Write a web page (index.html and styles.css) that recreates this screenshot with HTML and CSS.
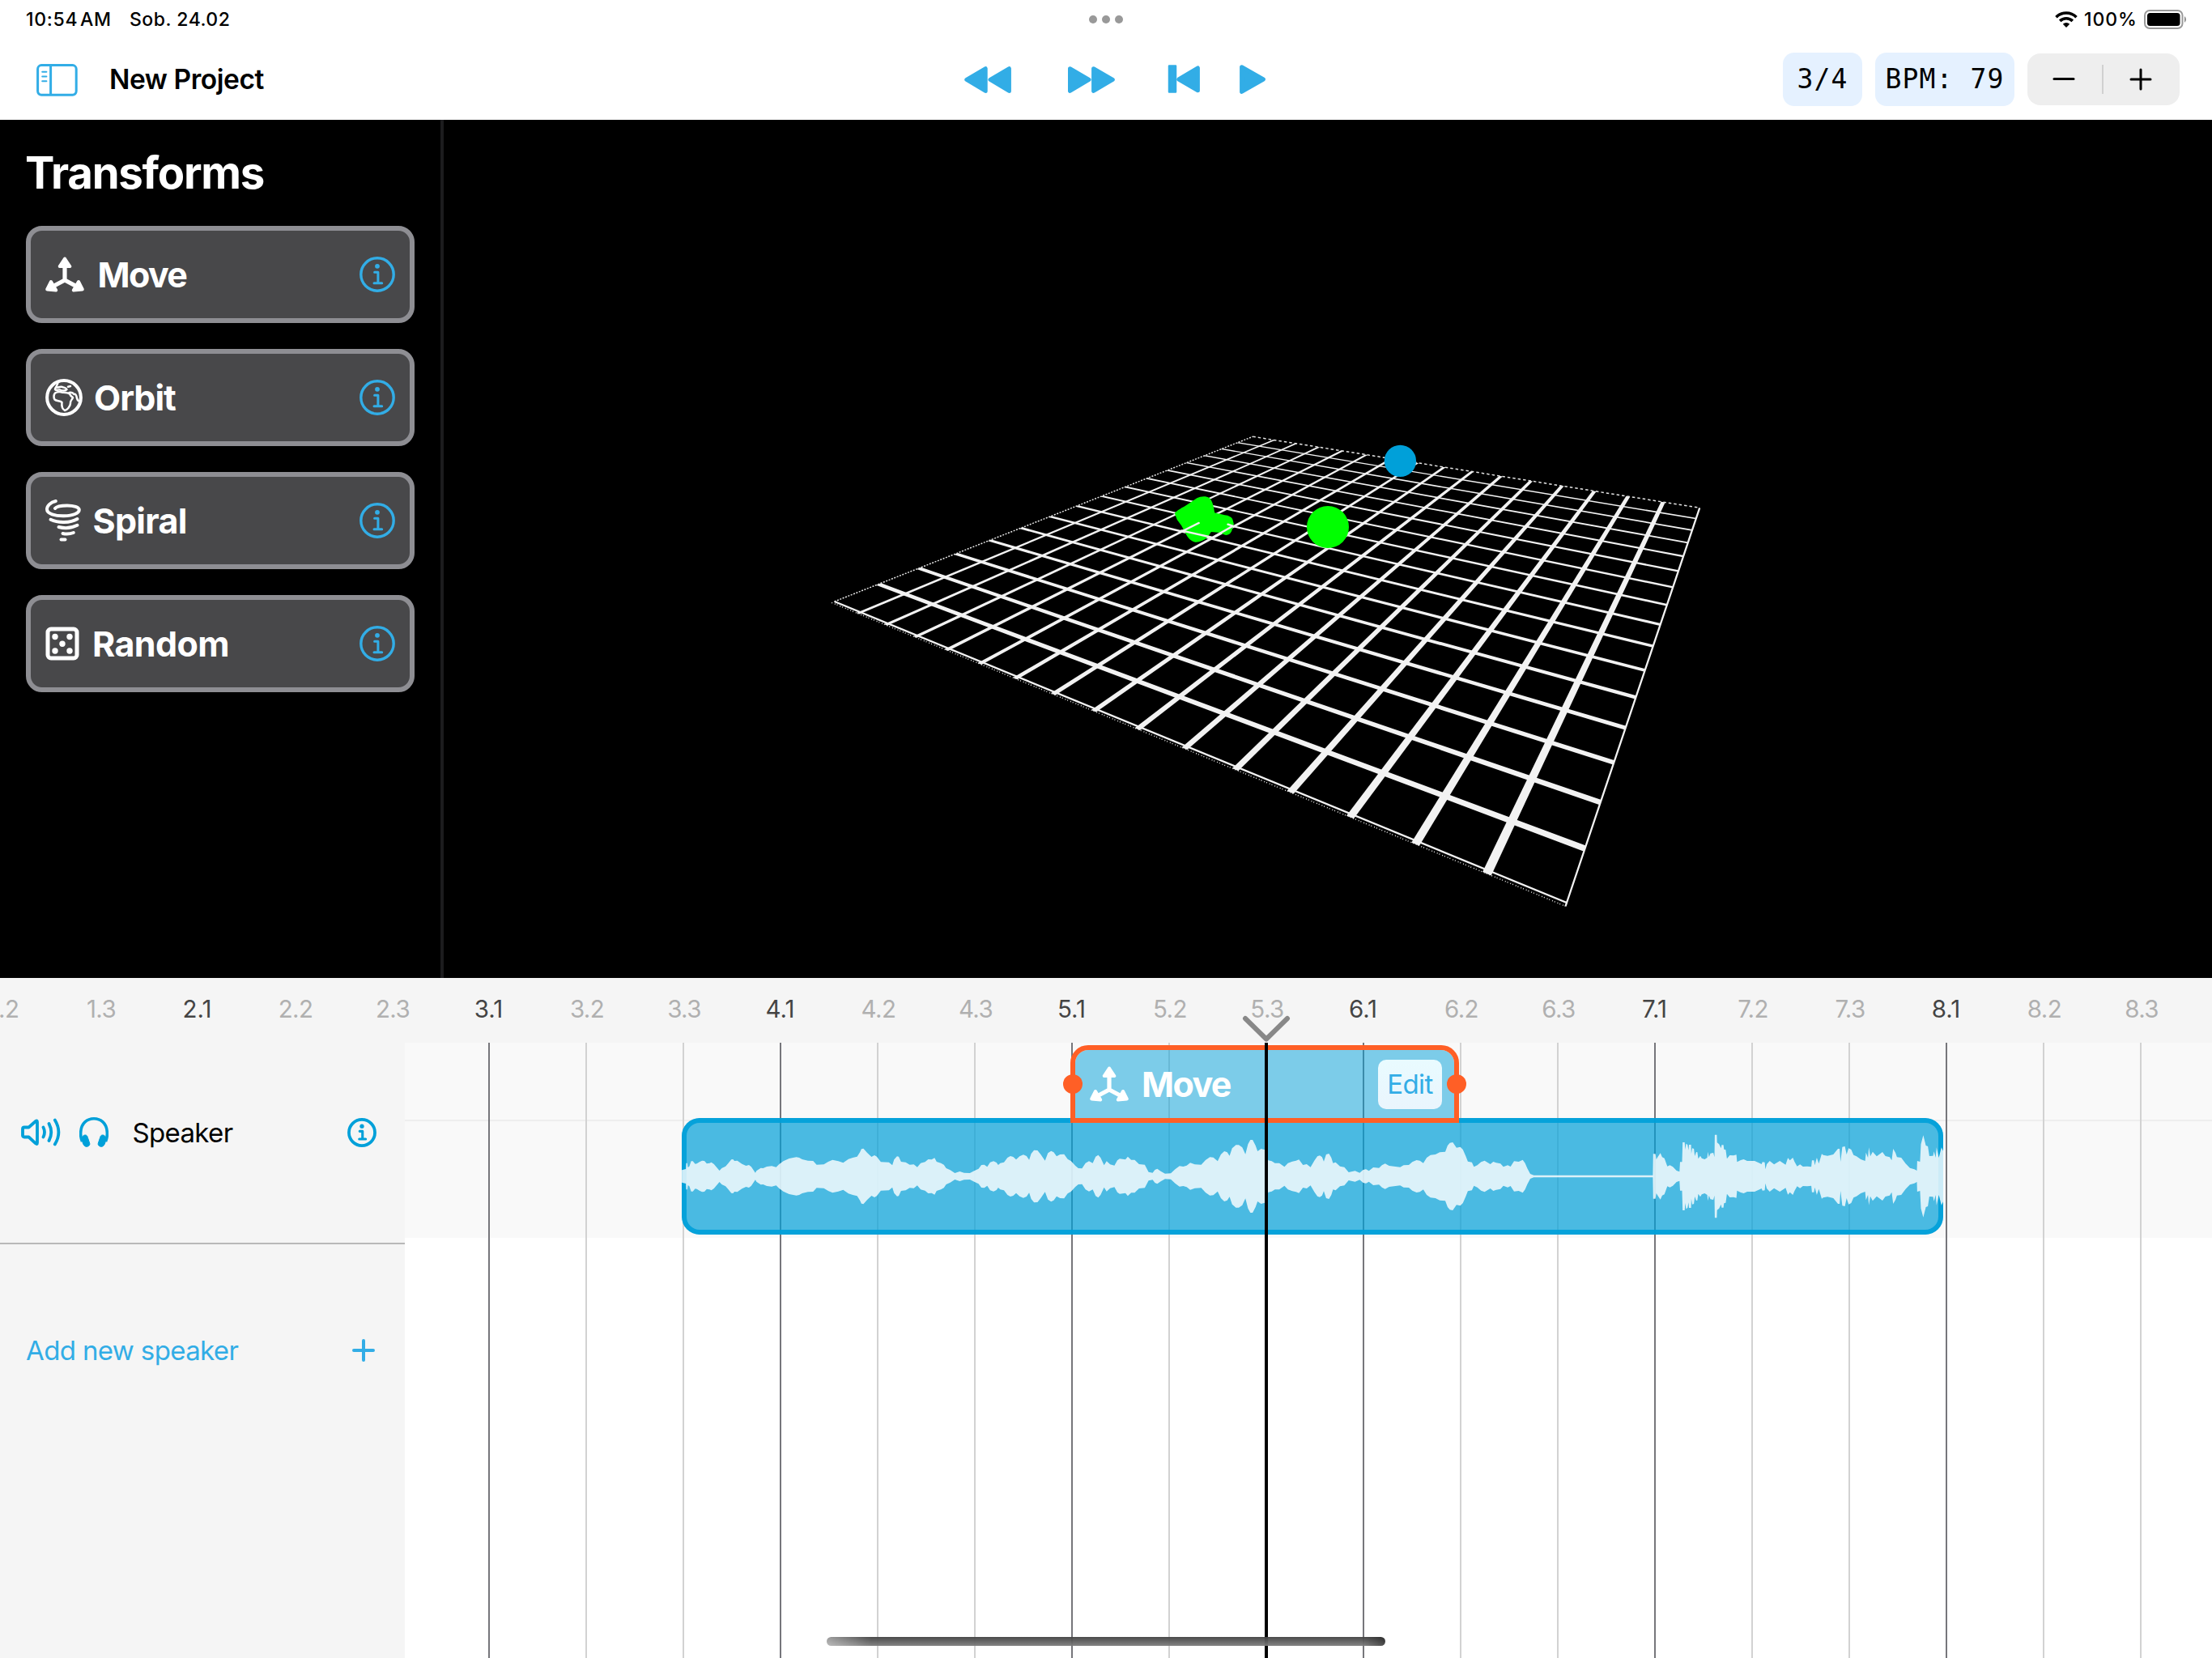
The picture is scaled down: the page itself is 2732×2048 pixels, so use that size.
FILE: index.html
```html
<!DOCTYPE html>
<html lang="en">
<head>
<meta charset="utf-8">
<title>New Project</title>
<link rel="stylesheet" href="styles.css">
</head>
<body>
<svg class="defs" width="0" height="0" aria-hidden="true">
  <symbol id="axes" viewBox="0 0 48 44">
    <g fill="none" stroke="currentColor" stroke-width="5.2" stroke-linecap="round">
      <path d="M24 10V29M24 29L8 37.500M24 29L40 37.500"/>
    </g>
    <g fill="currentColor" stroke="currentColor" stroke-width="4" stroke-linejoin="round">
      <path d="M24 2.500L30.300 12H17.700Z"/>
      <path d="M2.200 40.500L7 31L13.200 41.500Z"/>
      <path d="M45.800 40.500L41 31L34.800 41.500Z"/>
    </g>
  </symbol>
  <symbol id="info" viewBox="0 0 44 44">
    <circle cx="22" cy="22" r="20.200" fill="none" stroke="currentColor" stroke-width="3.400"/>
    <circle cx="22" cy="11.800" r="2.900" fill="currentColor"/>
    <path d="M18.600 19.200H22.900V32.500M18 32.800H27.700" fill="none" stroke="currentColor" stroke-width="3" stroke-linecap="round" stroke-linejoin="round"/>
  </symbol>
  <symbol id="info-bold" viewBox="0 0 44 44">
    <circle cx="22" cy="22" r="19.600" fill="none" stroke="currentColor" stroke-width="4.600"/>
    <circle cx="22" cy="12.500" r="3.200" fill="currentColor"/>
    <path d="M18.600 20H22.900V31.500M18 31.800H27.700" fill="none" stroke="currentColor" stroke-width="3.800" stroke-linecap="round" stroke-linejoin="round"/>
  </symbol>
</svg>

<header class="top">
  <div class="status">
    <span class="time">10:54 AM</span>
    <span class="date">Sob. 24.02</span>
    <div class="dots"><i></i><i></i><i></i></div>
    <svg class="wifi" viewBox="0 0 28 20">
      <g fill="none" stroke="#000" stroke-width="3.600">
        <path d="M1.500 7.200A17.800 17.800 0 0 1 26.500 7.200"/>
        <path d="M6.200 11.900A11.200 11.200 0 0 1 21.800 11.900"/>
      </g>
      <path d="M14 20L9.800 15.800A6 6 0 0 1 18.200 15.800Z"/>
    </svg>
    <span class="percent">100%</span>
    <svg class="battery" viewBox="0 0 54 24">
      <rect x="1" y="1" width="46.500" height="22" rx="6" fill="none" stroke="#999" stroke-width="2"/>
      <rect x="4" y="4" width="40.500" height="16" rx="3.500"/>
      <path d="M50 8A5 5 0 0 1 50 16Z" fill="#8a8a8a"/>
    </svg>
  </div>
  <div class="toolbar">
    <svg class="panel-icon" viewBox="0 0 52 40" fill="none" stroke="currentColor">
      <rect x="1.600" y="1.600" width="47.600" height="36.600" rx="4.600" stroke-width="3"/>
      <path d="M17.600 2V38" stroke-width="3"/>
      <path d="M7.200 9.800H12.400M7.200 15.500H12.400M7.200 21.300H12.400" stroke-width="2" stroke-linecap="round"/>
    </svg>
    <h1 class="project">New Project</h1>
    <svg class="transport" viewBox="1190 78 376 40" fill="currentColor" stroke="currentColor" stroke-width="5" stroke-linejoin="round">
      <path d="M1193.800 98.400L1217.200 84.700V112.400Z"/>
      <path d="M1223 98.400L1246.400 84.700V112.400Z"/>
      <path d="M1321.500 84.700L1345 98.400L1321.500 112.400Z"/>
      <path d="M1350.600 84.700L1374.300 98.400L1350.600 112.400Z"/>
      <rect x="1444" y="81.500" width="8" height="32" stroke-width="2.500"/>
      <path d="M1455.800 98L1479.400 84V111.800Z"/>
      <path d="M1533.600 82.700L1560.400 98L1533.600 113.400Z"/>
    </svg>
    <div class="chip meter">3/4</div>
    <div class="chip bpm">BPM: 79</div>
    <div class="stepper">
      <svg viewBox="0 0 28 28"><path d="M2 13.500H26"/></svg>
      <i></i>
      <svg viewBox="0 0 28 28"><path d="M2 14H26M14 2V26"/></svg>
    </div>
  </div>
</header>

<main class="workspace">
  <aside class="transforms">
    <h2>Transforms</h2>
    <div class="card">
      <svg class="ic-axes"><use href="#axes"/></svg><span class="t-move">Move</span>
      <svg class="info"><use href="#info"/></svg>
    </div>
    <div class="card">
      <svg class="ic-globe" viewBox="0 0 46 46" fill="none" stroke="currentColor" stroke-linejoin="round" stroke-linecap="round">
        <circle cx="23" cy="23" r="20.900" stroke-width="4"/>
        <path stroke-width="2.500" d="M15.500 3.500C16 8 12.500 9 12 13C14 15 16.500 13 18 13.500C21 15 25 15 26.500 13C25.500 10.500 23 11 21 10C18 9 16 11 14.500 10.500"/>
        <path stroke-width="2.500" d="M28 9.800L31 9"/>
        <path stroke-width="2.500" d="M12 17.500C16 14.800 19 15.800 21.500 16.800C25 17 28 17 30 18.500C31 21 32.500 22 34 23C33 26 30.500 27 31 30C31 34 27 38.500 24 39C20.500 37 20 33 20.500 29C18 26.500 14 28 11.500 25.500C10 22.500 10.500 19.500 12 17.500Z"/>
        <path stroke-width="2.500" d="M29.500 17C32 16.500 34.500 17.500 35.500 19C37.500 18 38.500 21 39 24C40 27 41.500 27.500 42 27.500"/>
      </svg><span class="t-orbit">Orbit</span>
      <svg class="info"><use href="#info"/></svg>
    </div>
    <div class="card">
      <svg class="ic-spiral" viewBox="0 0 44 52" fill="none" stroke="currentColor" stroke-width="4" stroke-linecap="round">
        <path d="M12.800 2C6 3.500 2 8 2 12C2 17.500 12 20.500 23 20.300C34 20 41.800 17 41.800 12.800C41.800 9.500 35 7.500 27 7.500C19 7.500 13.500 9 12 11"/>
        <path d="M6.500 24.800C16 29.500 31 29 39.500 24"/>
        <path d="M16.500 34C24 36 33 35 39.500 31.800"/>
        <path d="M21.500 42C26 43 31 42.500 34.800 41"/>
        <path d="M19.500 49.500H24.500"/>
      </svg><span class="t-spiral">Spiral</span>
      <svg class="info"><use href="#info"/></svg>
    </div>
    <div class="card">
      <svg class="ic-dice" viewBox="0 0 42 42" fill="currentColor">
        <rect x="3" y="3" width="36" height="36" rx="4" fill="none" stroke="currentColor" stroke-width="5"/>
        <circle cx="12" cy="12.500" r="3.700"/><circle cx="30" cy="12.500" r="3.700"/>
        <circle cx="21" cy="21.200" r="3.700"/>
        <circle cx="12" cy="30" r="3.700"/><circle cx="30" cy="30" r="3.700"/>
      </svg><span class="t-random">Random</span>
      <svg class="info"><use href="#info"/></svg>
    </div>
  </aside>
  <svg class="scene" viewBox="548 148 2184 1060">
    <g id="floor"></g>
    <g transform="translate(1000 500) scale(.38265 .33333)">
      <path fill="#0f0" d="M1178 402C1190 388 1204 380 1212 375L1250 346C1262 338 1280 337 1290 345C1300 356 1304 375 1307 400L1340 409C1352 410 1364 417 1366 428L1369 442L1362 468C1356 482 1346 486 1336 480L1324 474L1296 471L1284 491C1272 502 1258 510 1245 509C1232 506 1222 495 1216 482L1200 448L1186 426Z"/>
      <path fill="none" stroke="#f2f2f2" stroke-width="7" stroke-linecap="round" d="M1205 467L1256 438M1200 466L1300 492L1366 449L1350 443"/>
    </g>
    <circle cx="1729.400" cy="569.400" r="19.700" fill="#00a0d9"/>
    <circle cx="1640" cy="651" r="26" fill="#0f0"/>
  </svg>
</main>

<section class="timeline">
  <div class="ruler">
    <span>1.2</span><span>1.3</span><span class="bar">2.1</span><span>2.2</span><span>2.3</span><span class="bar">3.1</span><span>3.2</span><span>3.3</span><span class="bar">4.1</span><span>4.2</span><span>4.3</span><span class="bar">5.1</span><span>5.2</span><span>5.3</span><span class="bar">6.1</span><span>6.2</span><span>6.3</span><span class="bar">7.1</span><span>7.2</span><span>7.3</span><span class="bar">8.1</span><span>8.2</span><span>8.3</span>
  </div>
  <div class="tracks">
    <aside class="speakers">
      <div class="speaker">
        <svg class="ic-volume" viewBox="0 0 50 36" fill="none" stroke="currentColor" stroke-width="3.800" stroke-linecap="round" stroke-linejoin="round">
          <path d="M2 13.500Q2 11.500 4 11.500H9.500L18 4Q20 2.300 20 5V30.500Q20 33 18 31.300L9.500 23.500H4Q2 23.500 2 21.500Z"/>
          <path d="M27.500 11.500Q30.500 17.500 27.500 23.500M34.500 7Q40 17.500 34.500 28M41.800 2.500Q51 17.500 41.800 32.500"/>
        </svg>
        <svg class="ic-phones" viewBox="0 0 36 37">
          <path d="M3.500 30C1 24 1.500 20 1.800 17.500C2.500 7.500 9.500 1.800 18 1.800S33.500 7.500 34.200 17.500C34.500 20 35 24 32.500 30" fill="none" stroke="currentColor" stroke-width="3.600"/>
          <path d="M5.200 22.500C8.500 21 10 23 10.500 25.500L12.800 32.500C13.500 36 8 38 5.500 34.500C3.500 31 2 25 5.200 22.500ZM30.800 22.500C27.500 21 26 23 25.500 25.500L23.200 32.500C22.500 36 28 38 30.500 34.500C32.500 31 34 25 30.800 22.500Z" fill="currentColor" stroke="currentColor" stroke-width="1"/>
        </svg>
        <span class="speaker-name">Speaker</span>
        <svg class="info small"><use href="#info-bold"/></svg>
      </div>
      <div class="add">
        <span>Add new speaker</span>
        <svg viewBox="0 0 28 28"><path d="M2 14H26M14 2V26"/></svg>
      </div>
    </aside>
    <div class="lanes">
      <div class="lane"></div>
      <div class="beats"></div>
      <div class="audio"><svg id="wave" viewBox="842 1381 1558 144"></svg></div>
      <div class="move">
        <svg class="ic-axes"><use href="#axes"/></svg><span class="t-move">Move</span>
        <button class="edit">Edit</button>
        <i class="handle left"></i><i class="handle right"></i>
      </div>
      <div class="playhead">
        <svg viewBox="0 0 60 34"><path d="M4 5L30 30.500L56 5" fill="none" stroke="#888" stroke-width="6" stroke-linecap="round" stroke-linejoin="round"/></svg>
      </div>
    </div>
  </div>
  <div class="home"></div>
</section>
<script src="script.js"></script>
</body>
</html>
```
FILE: styles.css
```css
* { box-sizing: border-box; }
body {
  margin: 0;
  width: 2732px;
  height: 2048px;
  overflow: hidden;
  display: flex;
  flex-direction: column;
  background: #fff;
  color: #000;
  font-family: Inter, "Liberation Sans", sans-serif;
}
h1, h2 { margin: 0; }
svg { display: block; flex: none; }
.defs { position: absolute; }
span { white-space: nowrap; }

/* top bar */
.top { height: 148px; flex: none; display: flex; flex-direction: column; }
.status {
  height: 48px;
  display: flex;
  align-items: center;
  padding: 0 30px 0 32px;
  font-size: 23px;
  font-weight: 500;
}
.time { width: 128px; letter-spacing: .7px; word-spacing: -4px; }
.date { letter-spacing: .5px; }
.dots { display: flex; gap: 6px; position: absolute; left: 1345px; top: 19px; }
.dots i { width: 10px; height: 10px; border-radius: 50%; background: #999; }
.wifi { width: 28px; height: 20px; margin-left: auto; }
.percent { width: 65px; margin: 0 9px 0 8px; letter-spacing: .9px; }
.battery { width: 54px; height: 24px; }

.toolbar { height: 100px; display: flex; align-items: center; padding-right: 40px; }
.panel-icon { width: 52px; height: 40px; margin: 2px 0 0 45px; color: #32ade6; }
.project { width: 190px; margin: 0 0 0 38px; font-size: 33.500px; font-weight: 600; letter-spacing: -.45px; white-space: nowrap; }
.transport { width: 376px; height: 40px; margin-left: 865px; color: #32ade6; }
.chip {
  height: 66px;
  border-radius: 14px;
  background: #e5f1ff;
  font: 33px/66px "DejaVu Sans Mono", monospace;
  letter-spacing: 1.1px;
  text-align: center;
  white-space: pre;
}
.meter { width: 98px; margin-left: auto; }
.bpm { width: 172px; margin: 0 16px; }
.stepper {
  width: 188px; height: 64px;
  border-radius: 16px;
  background: #eee;
  display: flex;
  align-items: center;
  justify-content: space-between;
  padding: 0 34px 0 31px;
}
.stepper svg, .add svg { width: 28px; height: 28px; stroke: currentColor; stroke-width: 3; stroke-linecap: round; }
.stepper i { width: 2px; height: 36px; background: #d0d0d0; }

/* workspace */
.workspace { height: 1060px; flex: none; display: flex; background: #000; }
.transforms {
  width: 548px;
  border-right: 4px solid #1c1c1e;
  padding: 0 32px;
  color: #fff;
  display: flex;
  flex-direction: column;
  gap: 32px;
}
.transforms h2 { height: 99px; margin-left: -1px; line-height: 131px; font-size: 54.500px; font-weight: 700; letter-spacing: -1.25px; }
.card {
  height: 120px;
  border: 6px solid #8e8e93;
  border-radius: 20px;
  background: #48484a;
  display: flex;
  align-items: center;
  padding: 0 18px;
  font-size: 43px;
  font-weight: 700;
}
.card .info { width: 44px; height: 44px; margin-left: auto; color: #32ade6; }
.ic-axes { width: 48px; height: 44px; }
.card .ic-axes { margin-right: 16.500px; }
.ic-globe { width: 46px; height: 46px; margin-right: 14px; }
.ic-spiral { width: 44px; height: 52px; margin-right: 14.500px; }
.ic-dice { width: 42px; height: 42px; margin-right: 16px; }
.t-move { letter-spacing: -1.6px; }
.t-orbit { letter-spacing: -1px; }
.t-spiral { letter-spacing: -.7px; }
.t-random { letter-spacing: -.6px; }
.scene { width: 2184px; height: 1060px; }
.scene .near { fill: #f2f2f2; }
.scene .edge { fill: none; stroke: #f2f2f2; stroke-width: 2.300; }
.scene .far { fill: none; stroke: #e4e4e4; stroke-width: 1.500; }

/* timeline */
.timeline { flex: 1; display: flex; flex-direction: column; }
.ruler { height: 80px; flex: none; display: flex; margin-left: -56px; background: #f5f5f5; }
.ruler span {
  width: 120px;
  flex: none;
  padding-left: 2px;
  text-align: center;
  font-size: 29.500px;
  line-height: 77px;
  letter-spacing: -.6px;
  color: #b0b0b0;
}
.ruler .bar { padding: 0 1px 0 0; letter-spacing: 0; color: #444; }
.tracks { flex: 1; display: flex; }
.speakers { width: 500px; background: #f5f5f5; }
.speaker {
  height: 249px;
  border-bottom: 2px solid #b8b8b8;
  display: flex;
  align-items: center;
  padding: 0 35px 26px 26px;
  color: #00a0d9;
}
.ic-volume { width: 50px; height: 36px; }
.ic-phones { width: 36px; height: 37px; margin-left: 22px; }
.speaker-name { margin-left: 29.500px; font-size: 33px; letter-spacing: -.65px; color: #000; }
.info.small { width: 36px; height: 36px; margin-left: auto; }
.add {
  height: 261px;
  display: flex;
  align-items: center;
  justify-content: space-between;
  padding: 0 37px 0 32px;
  font-size: 33px;
  letter-spacing: -.63px;
  color: #32ade6;
}
.add svg { stroke-width: 4; }
.lanes { flex: 1; position: relative; background: #fff; }
.lane { height: 241px; background: linear-gradient(#eee, #eee) 0 95px / 100% 2px no-repeat #f9f9f9; }
.beats {
  position: absolute;
  inset: 0;
  background:
    repeating-linear-gradient(90deg, #76767b 0 2px, transparent 2px 360px) 103px 0 / 360px 100%,
    linear-gradient(90deg, #d2d2d2 2px, transparent 2px) 103px 0 / 120px 100%;
}
.audio {
  position: absolute;
  left: 342px; top: 93px;
  width: 1558px; height: 144px;
  border-radius: 22px;
  background: rgba(0, 160, 217, .7);
  overflow: hidden;
}
.audio::before { content: ""; position: absolute; inset: 0; border: 6px solid rgba(0, 160, 217, .92); border-radius: 22px; }
.audio svg { position: relative; width: 1558px; height: 144px; }
.audio path { fill: rgba(255, 255, 255, .8); }
.move {
  position: absolute;
  left: 822px; top: 3px;
  width: 480px; height: 96px;
  border: 6px solid #ff5f26;
  border-radius: 22px 22px 0 0;
  background: rgba(0, 160, 217, .5) padding-box;
  display: flex;
  align-items: center;
  padding: 0 15px 0 18px;
  color: #fff;
  font-size: 43px;
  font-weight: 700;
}
.move .t-move { margin-left: 16px; }
.edit {
  width: 79px; height: 61px;
  margin-left: auto;
  padding: 0;
  border: 0;
  border-radius: 10px;
  background: linear-gradient(#e9fbff, #eaf5fd);
  color: #32ade6;
  font: 33px Inter, sans-serif;
  letter-spacing: -.6px;
}
.handle { position: absolute; top: 30px; width: 24px; height: 24px; border-radius: 50%; background: #ff5f26; }
.handle.left { left: -15px; }
.handle.right { right: -15px; }
.playhead { position: absolute; left: 1062px; top: 0; bottom: 0; width: 4px; background: #000; }
.playhead svg { position: absolute; left: -28px; top: -35px; width: 60px; height: 34px; }
.home {
  position: absolute;
  left: 1021px; top: 2022px;
  width: 690px; height: 11px;
  border-radius: 6px;
  background:
    linear-gradient(90deg, rgba(255, 255, 255, .45), transparent 8%, transparent 96%, rgba(0, 0, 0, .4)),
    linear-gradient(rgba(65, 65, 65, .95), rgba(125, 125, 125, .95));
}
```
FILE: script.js
```js
const NS = 'http://www.w3.org/2000/svg';
function add(parent, attrs) {
  const el = document.createElementNS(NS, 'path');
  for (const k in attrs) el.setAttribute(k, attrs[k]);
  parent.appendChild(el);
}

/* Perspective floor: unit square mapped onto four screen corners. */
const A = [1030.6, 743], B = [1935, 1115], C = [2099.2, 627.3], D = [1547.3, 539.3];
const dx1 = B[0] - C[0], dx2 = D[0] - C[0], sx = A[0] - B[0] + C[0] - D[0];
const dy1 = B[1] - C[1], dy2 = D[1] - C[1], sy = A[1] - B[1] + C[1] - D[1];
const det = dx1 * dy2 - dx2 * dy1;
const g = (sx * dy2 - dx2 * sy) / det, h = (dx1 * sy - sx * dy1) / det;
function project(u, v) {
  const w = g * u + h * v + 1;
  return [
    ((B[0] - A[0] + g * B[0]) * u + (D[0] - A[0] + h * D[0]) * v + A[0]) / w,
    ((B[1] - A[1] + g * B[1]) * u + (D[1] - A[1] + h * D[1]) * v + A[1]) / w
  ].map(n => n.toFixed(2)).join(' ');
}
function poly(points) { return 'M' + points.map(p => project(p[0], p[1])).join('L'); }

const floor = document.getElementById('floor');
const N = 16, half = 0.058 / N, over = 0.06 / N;
for (let i = 1; i < N; i++) {
  const t = i / N;
  add(floor, { class: 'near', d: poly([[t - half, -over], [t + half, -over], [t + half, 1], [t - half, 1]]) + 'Z' });
  add(floor, { class: 'near', d: poly([[0, t - half], [0, t + half], [1, t + half], [1, t - half]]) + 'Z' });
}
add(floor, { class: 'edge', d: poly([[0, 0], [1, 0], [1, 1]]) });
add(floor, { class: 'edge', d: poly([[1, 0], [1, -over]]) });
add(floor, { class: 'far', d: poly([[0, 0], [0, 1]]), 'stroke-dasharray': '2 1.6' });
add(floor, { class: 'far', d: poly([[0, 1], [1, 1]]), 'stroke-dasharray': '3.500 3' });
add(floor, { class: 'far', d: poly([[0, -0.06 / N], [1, -0.06 / N]]), 'stroke-dasharray': '1 3 1 2' });

/* Waveform envelope: [start x, centre, x/level pairs]. */
const wave = [
  [830, 249, '34,226 48,222 49,200 53,200 55,216 60,212 66,193 72,193 80,203 86,202 95,196 104,191 112,192 120,202 130,200 136,197 145,204 155,217 164,228 172,219 185,212 195,200 205,187 211,186 216,192 226,191 242,203 256,210 266,207 274,214 288,236 292,229 307,218 315,219 328,213 345,211 360,215 370,205 385,193 405,183 430,178 440,180 450,186 470,191 488,192 500,206 525,205 540,195 555,188 575,193 592,199 610,185 625,180 640,176 650,160 655,148 662,146 675,162 690,177 700,171 708,176 722,196 750,197 762,208 768,187 778,175 784,176 792,195 808,197 822,206 836,205 848,215 860,200 875,196 886,186 898,187 908,181 915,195 930,200 940,206 948,219 962,226 978,237 995,231 1010,236 1030,237 1045,229 1060,221 1070,207 1080,206 1090,214 1100,197 1112,193 1122,198 1128,207 1135,200 1148,197 1160,180 1170,174 1180,177 1190,187 1202,175 1215,169 1226,174 1235,188 1242,165 1252,152 1264,153 1275,168 1290,191 1300,163 1311,155 1320,160 1330,175 1342,168 1356,167 1368,185 1380,193 1395,210 1405,219 1418,220 1430,200 1442,193 1455,200 1465,176 1474,170 1482,180 1494,208 1503,193 1515,205 1530,209 1540,190 1548,184 1568,187'],
  [1380, 249, '28,187 36,176 48,188 60,188 75,204 95,206 108,233 122,236 130,225 138,221 150,230 165,239 185,238 200,223 215,211 228,213 240,209 252,199 268,205 290,206 305,189 320,178 332,179 347,193 358,168 370,156 380,160 388,173 397,145 410,133 420,133 432,142 443,167 452,130 460,114 468,114 478,135 485,156 497,147 510,151 522,190 534,193 545,200 560,200 578,214 590,200 605,194 618,191 628,187 642,207 655,204 668,215 682,190 692,175 700,172 708,178 714,194 722,168 732,165 740,180 746,200 755,197 770,212 785,215 800,234 822,229 838,236 850,225 860,223 870,229 885,216 905,218 915,208 926,202 940,210 978,215 990,208 1008,207 1020,196 1035,189 1046,191 1058,200 1070,180 1083,170 1100,168 1115,160 1134,158 1142,135 1150,125 1160,123 1173,143 1186,140 1195,150 1205,175 1212,194 1226,197 1233,214 1245,208 1258,196 1270,191 1290,204 1300,195 1310,199 1325,202 1335,214 1350,208 1360,213 1372,193 1388,195 1402,188 1410,200 1418,220 1428,240 1440,245 1460,245'],
  [1900, 759, '1,755 396,755 397,676 405,676 408,696 415,684 422,673 428,688 436,692 446,722 455,718 465,724 478,738 488,742 490,706 497,706 499,633 506,633 508,660 511,638 516,642 519,662 521,642 528,642 529,676 532,655 538,657 541,684 546,669 550,670 553,694 560,683 565,692 575,696 584,690 586,668 590,688 595,674 605,672 609,688 610,605 617,605 618,634 625,640 632,655 634,643 640,643 642,659 648,661 652,694 662,681 675,682 685,679 687,706 700,699 710,696 722,702 748,702 762,709 772,714 775,706 783,707 785,733 790,714 800,702 815,715 835,702 855,716 863,691 870,700 880,690 886,705 895,722 905,715 915,723 930,722 944,724 946,700 953,700 956,718 963,690 970,712 980,676 985,680 1000,683 1020,678 1036,657 1042,657 1045,705 1051,650 1060,648 1066,678 1073,655 1082,660 1090,680 1100,685 1115,696 1130,702 1133,671 1140,690 1143,652 1148,685 1156,668 1170,685 1190,669 1200,684 1215,688 1222,700 1227,657 1235,672 1240,688 1255,690 1270,712 1285,728 1300,733 1309,738 1310,702 1320,705 1323,640 1331,607 1340,645 1347,648 1352,684 1365,683 1368,667 1374,690 1377,652 1385,690 1394,652 1400,665']
];
const upper = [];
for (const [x0, mid, data] of wave)
  for (const pair of data.split(' ')) {
    const [x, y] = pair.split(',').map(Number);
    upper.push([x0 + x / 2.8, (mid - y) / 3]);
  }
const top_ = upper.map(p => p[0].toFixed(1) + ' ' + (1453 - p[1]).toFixed(1));
const bottom = upper.map(p => p[0].toFixed(1) + ' ' + (1453 + p[1]).toFixed(1)).reverse();
add(document.getElementById('wave'), { d: 'M' + top_.concat(bottom).join('L') + 'Z' });
```
